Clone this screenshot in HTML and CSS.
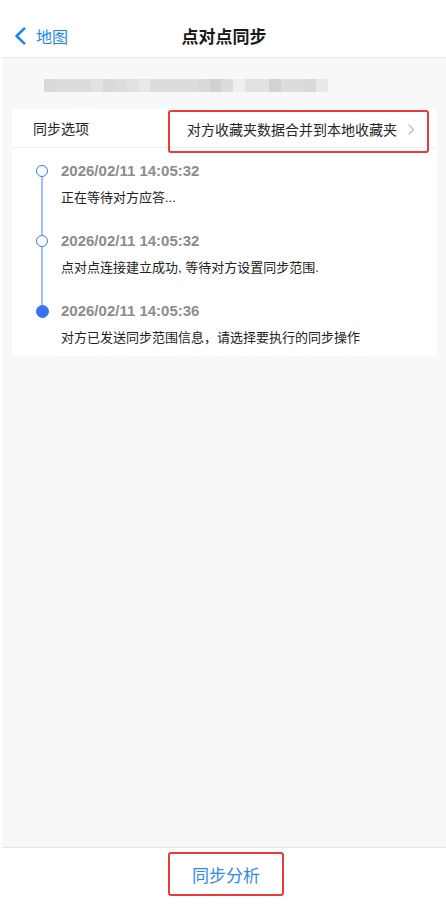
FILE: index.html
```html
<!DOCTYPE html>
<html lang="zh-CN">
<head>
<meta charset="utf-8">
<title>点对点同步</title>
<link rel="stylesheet" href="styles.css">
</head>
<body>
<div class="app">
  <header class="nav">
    <a class="back" href="#">
      <svg class="back-icon" width="12" height="18" viewBox="0 0 12 18"><path d="M10.2 1.6 L2.6 9 L10.2 16.4" fill="none" stroke="currentColor" stroke-width="2.6" stroke-linecap="round" stroke-linejoin="round"/></svg>
      <span>地图</span>
    </a>
    <h1 class="title">点对点同步</h1>
    <span class="nav-side"></span>
  </header>

  <main class="content">
    <div class="peer-id" aria-label="blurred">
      <i class="b2"></i><i class="b3"></i><i class="b3"></i><i class="b3"></i><i class="b4"></i><i class="b2"></i><i class="b3"></i><i class="b4"></i><i class="b5"></i><i class="b3"></i><i class="b3"></i><i class="b3"></i><i class="b3"></i><i class="b2"></i><i class="b1"></i><i class="b3"></i><i class="b6"></i><i class="b4"></i><i class="b4"></i><i class="b1"></i><i class="b3"></i><i class="b3"></i><i class="b2"></i><i class="b5"></i>
    </div>

    <section class="card">
      <div class="option-row">
        <span class="option-label">同步选项</span>
        <span class="option-value highlight">
          <span class="option-text">对方收藏夹数据合并到本地收藏夹</span>
          <svg class="chev" width="7" height="11" viewBox="0 0 7 11"><path d="M1 1 L5.5 5.5 L1 10" fill="none" stroke="currentColor" stroke-width="1.3" stroke-linecap="round" stroke-linejoin="round"/></svg>
        </span>
      </div>

      <ol class="timeline">
        <li class="tl-item">
          <div class="tl-marker"><span class="dot"></span><span class="line"></span></div>
          <div class="tl-body">
            <div class="tl-time">2026/02/11 14:05:32</div>
            <div class="tl-msg">正在等待对方应答...</div>
          </div>
        </li>
        <li class="tl-item">
          <div class="tl-marker"><span class="dot"></span><span class="line"></span></div>
          <div class="tl-body">
            <div class="tl-time">2026/02/11 14:05:32</div>
            <div class="tl-msg">点对点连接建立成功, 等待对方设置同步范围.</div>
          </div>
        </li>
        <li class="tl-item last">
          <div class="tl-marker"><span class="dot filled"></span></div>
          <div class="tl-body">
            <div class="tl-time">2026/02/11 14:05:36</div>
            <div class="tl-msg">对方已发送同步范围信息，请选择要执行的同步操作</div>
          </div>
        </li>
      </ol>
    </section>
  </main>

  <footer class="footer">
    <button class="analyze highlight" type="button">同步分析</button>
  </footer>
</div>
</body>
</html>
```

FILE: styles.css
```css
* { box-sizing: border-box; }

html, body {
  margin: 0;
  height: 100%;
}

body {
  background: #ffffff;
  padding-left: 2px;
  font-family: "Liberation Sans", "Noto Sans CJK SC", sans-serif;
  color: #1f1f1f;
}

.app {
  height: 100vh;
  display: flex;
  flex-direction: column;
}

/* ---------- nav ---------- */
.nav {
  height: 58px;
  flex: 0 0 auto;
  display: grid;
  grid-template-columns: 1fr auto 1fr;
  align-items: center;
  padding-top: 14px;
  background: #fff;
  border-bottom: 1px solid #e4e4e6;
}

.back {
  display: flex;
  align-items: center;
  gap: 10px;
  padding-left: 12px;
  color: #1b87f5;
  text-decoration: none;
  font-family: "Noto Sans CJK SC", sans-serif;
  font-size: 16px;
  line-height: 20px;
}

.back-icon { display: block; }

.title {
  margin: 0;
  font-family: "Noto Sans CJK SC", sans-serif;
  font-size: 17px;
  font-weight: 700;
  line-height: 22px;
  color: #1a1a1a;
}

/* ---------- content ---------- */
.content {
  flex: 1 1 auto;
  background: #f7f8fa;
  padding-top: 21px;
}

.peer-id {
  display: flex;
  margin-left: 42px;
  height: 13px;
  width: 284px;
  filter: blur(0.6px);
}

.peer-id i {
  flex: 1 1 0;
  height: 100%;
}
.peer-id .b1 { background: #d2d2d4; }
.peer-id .b2 { background: #d9d9db; }
.peer-id .b3 { background: #dcdcde; }
.peer-id .b4 { background: #e2e2e4; }
.peer-id .b5 { background: #e8e8ea; }
.peer-id .b6 { background: #efeff1; }

.card {
  margin: 17px 9px 0 10px;
  background: #fff;
}

.option-row {
  height: 39px;
  display: flex;
  align-items: flex-start;
  justify-content: space-between;
  padding-left: 21px;
  border-bottom: 1px solid #f1f1f3;
}

.option-label {
  line-height: 39px;
  font-family: "Noto Sans CJK SC", sans-serif;
  font-size: 14px;
  color: #262626;
}

.highlight {
  border: 2px solid #ec3a3a;
  border-radius: 3px;
}

.option-value {
  margin-top: 1px;
  margin-right: 8px;
  width: 261px;
  height: 43px;
  display: flex;
  align-items: flex-start;
  padding: 7px 0 0 17px;
  gap: 11px;
  font-family: "Noto Sans CJK SC", sans-serif;
  font-size: 14px;
  line-height: 20px;
  color: #262626;
  white-space: nowrap;
  position: relative;
}

.option-text { flex: 0 0 auto; }

.chev {
  color: #bdbdbd;
  margin-top: 5px;
  flex: 0 0 auto;
}

/* ---------- timeline ---------- */
.timeline {
  list-style: none;
  margin: 0;
  padding: 13px 0 8px 21px;
}

.tl-item {
  display: grid;
  grid-template-columns: 18px 1fr;
  column-gap: 10px;
}

.tl-marker {
  display: flex;
  flex-direction: column;
  align-items: center;
  padding-top: 4px;
}

.dot {
  width: 12px;
  height: 12px;
  border-radius: 50%;
  border: 1.5px solid #3b7af6;
  background: #fff;
  flex: 0 0 auto;
}

.dot.filled {
  background: #3572f6;
  border-color: #3572f6;
  width: 13px;
  height: 13px;
  margin-top: -0.5px;
}

.line {
  flex: 1 1 auto;
  width: 2px;
  background: #a2c1fb;
  margin-bottom: -4px;
}

.tl-body { padding-bottom: 23px; }
.tl-item.last .tl-body { padding-bottom: 0; }

.tl-time {
  font-family: "Liberation Sans", "Noto Sans CJK SC", sans-serif;
  font-weight: 700;
  font-size: 15px;
  line-height: 20px;
  color: #8c8c8c;
}

.tl-msg {
  margin-top: 7px;
  font-family: "Liberation Sans", "Noto Sans CJK SC", sans-serif;
  font-size: 13px;
  line-height: 20px;
  color: #222;
}

/* ---------- footer ---------- */
.footer {
  flex: 0 0 74px;
  border-top: 1px solid #e6e6e8;
  background: #fff;
  display: flex;
  justify-content: center;
  align-items: flex-start;
  padding-top: 4px;
  padding-left: 4px;
}

.analyze {
  width: 116px;
  height: 44px;
  background: #fff;
  color: #2a8bf2;
  font-family: "Noto Sans CJK SC", sans-serif;
  font-size: 17px;
  padding: 0;
  cursor: pointer;
}
```
